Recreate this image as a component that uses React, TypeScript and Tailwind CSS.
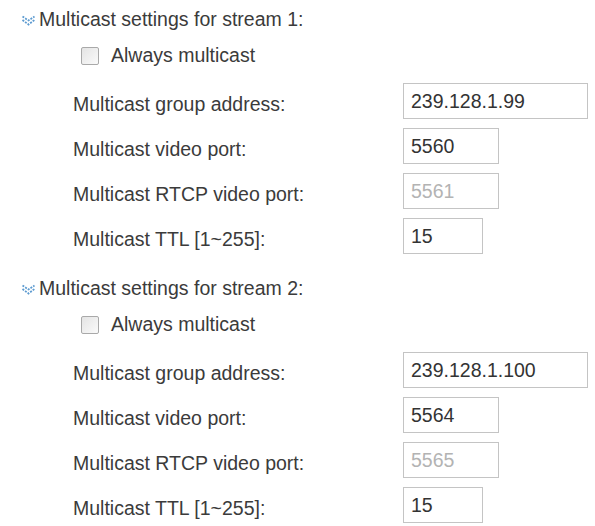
import React from "react";

type Field = {
  label: string;
  value: string;
  width: string;
  disabled?: boolean;
};

const font = { fontFamily: '"Liberation Sans", Arial, sans-serif' };

const ChevronIcon = () => (
  <svg width="15" height="11" viewBox="0 0 15 11" className="shrink-0">
    <polyline
      points="1.5,1.5 7.5,5.5 13.5,1.5"
      fill="none"
      stroke="#5d9bd0"
      strokeWidth="1.8"
      strokeDasharray="2 1.2"
    />
    <polyline
      points="1.5,5 7.5,9.5 13.5,5"
      fill="none"
      stroke="#5d9bd0"
      strokeWidth="1.8"
      strokeDasharray="2 1.2"
    />
  </svg>
);

const StreamBlock: React.FC<{ stream: number; fields: Field[] }> = ({
  stream,
  fields,
}) => (
  <div className="flex flex-col">
    <div className="h-[24px] flex items-center gap-[3px] pl-[21px]">
      <ChevronIcon />
      <span className="text-[19.5px] leading-none text-[#3b3b3b]">
        Multicast settings for stream {stream}:
      </span>
    </div>

    <div className="h-[24px] mt-[12px] flex items-center pl-[81px] gap-[12px]">
      <span className="w-[18px] h-[18px] border border-[#a9a9a9] rounded-[2px] bg-gradient-to-br from-[#e4e4e4] to-[#fafafa]" />
      <span className="text-[19.5px] leading-none text-[#3b3b3b]">
        Always multicast
      </span>
    </div>

    <div className="mt-[15px] flex flex-col gap-[9px]">
      {fields.map((f) => (
        <div key={f.label} className="h-[36px] flex items-center">
          <label className="w-[403px] shrink-0 pl-[73px] pt-[7px] text-[19.5px] leading-none text-[#3b3b3b] whitespace-nowrap">
            {f.label}
          </label>
          <input
            type="text"
            defaultValue={f.value}
            disabled={f.disabled}
            style={font}
            className={
              f.width +
              " h-[36px] border border-[#c4c4c4] bg-white px-[7px] text-[19.5px] outline-none " +
              (f.disabled ? "text-[#b3b3b3]" : "text-[#333333]")
            }
          />
        </div>
      ))}
    </div>
  </div>
);

export default function App() {
  const stream1: Field[] = [
    { label: "Multicast group address:", value: "239.128.1.99", width: "w-[185px]" },
    { label: "Multicast video port:", value: "5560", width: "w-[96px]" },
    { label: "Multicast RTCP video port:", value: "5561", width: "w-[96px]", disabled: true },
    { label: "Multicast TTL [1~255]:", value: "15", width: "w-[80px]" },
  ];
  const stream2: Field[] = [
    { label: "Multicast group address:", value: "239.128.1.100", width: "w-[185px]" },
    { label: "Multicast video port:", value: "5564", width: "w-[96px]" },
    { label: "Multicast RTCP video port:", value: "5565", width: "w-[96px]", disabled: true },
    { label: "Multicast TTL [1~255]:", value: "15", width: "w-[80px]" },
  ];

  return (
    <div
      className="w-[595px] h-[526px] bg-white overflow-hidden pt-[8px] flex flex-col gap-[23px]"
      style={font}
    >
      <StreamBlock stream={1} fields={stream1} />
      <StreamBlock stream={2} fields={stream2} />
    </div>
  );
}
